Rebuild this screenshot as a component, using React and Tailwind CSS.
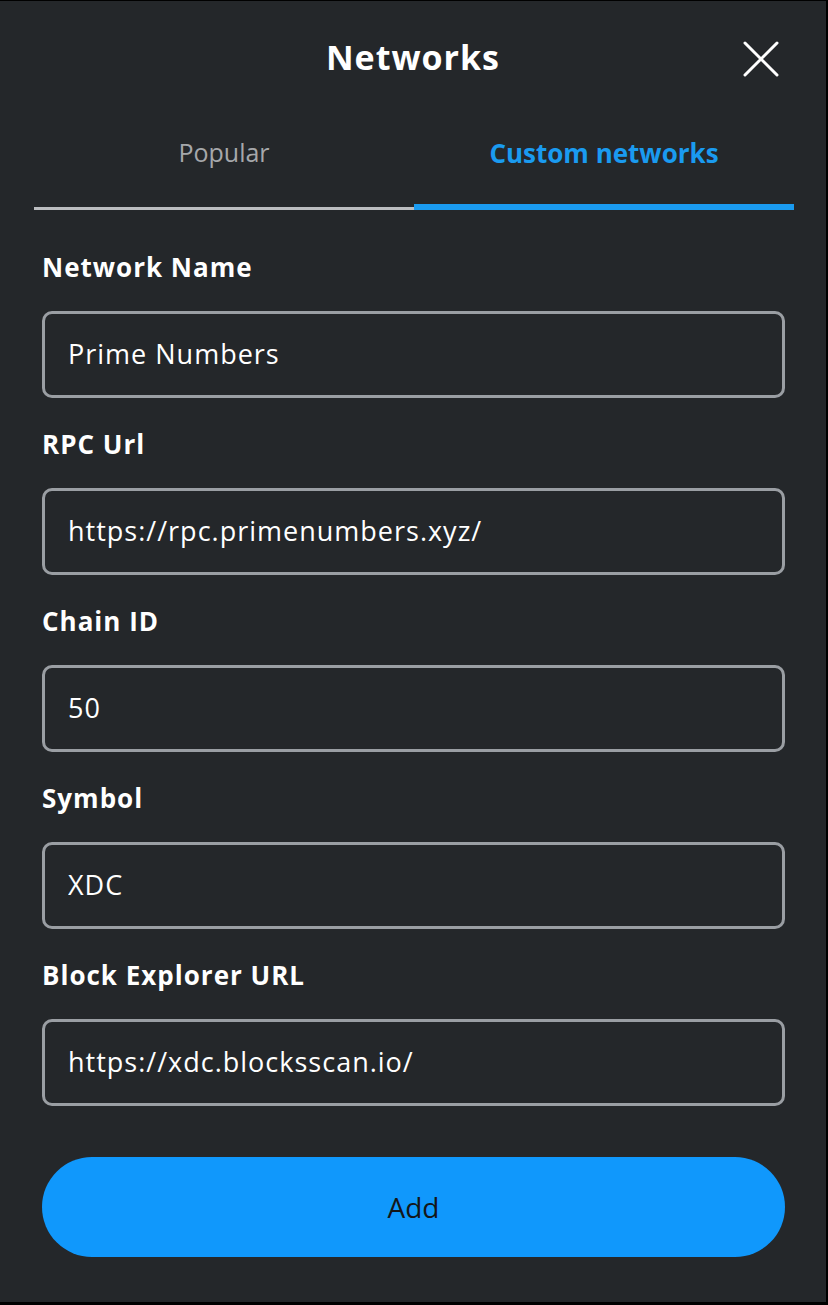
import { useState } from "react";

const FIELDS = [
  { label: "Network Name", value: "Prime Numbers" },
  { label: "RPC Url", value: "https://rpc.primenumbers.xyz/" },
  { label: "Chain ID", value: "50" },
  { label: "Symbol", value: "XDC" },
  { label: "Block Explorer URL", value: "https://xdc.blocksscan.io/" },
];

function CloseIcon() {
  return (
    <svg width="38" height="38" viewBox="0 0 38 38" fill="none">
      <path
        d="M3 3L35 35M35 3L3 35"
        stroke="#ffffff"
        strokeWidth="3"
        strokeLinecap="round"
      />
    </svg>
  );
}

export default function App() {
  const [tab, setTab] = useState("custom");

  return (
    <div
      className="flex min-h-[1305px] w-[828px] flex-col border-t border-r-2 border-b-[3px] border-black bg-[#24272a] text-white"
      style={{ fontFamily: "'Open Sans', Lato, sans-serif" }}
    >
      <div className="relative flex h-[116px] items-start justify-center">
        <h1 className="pt-[34px] text-[34px] leading-[44px] font-bold tracking-[1px]">
          Networks
        </h1>
        <button
          type="button"
          className="absolute top-[39px] right-[46px] flex items-center justify-center"
        >
          <CloseIcon />
        </button>
      </div>

      <div className="mr-[32px] ml-[34px] flex">
        <button
          type="button"
          onClick={() => setTab("popular")}
          className="flex flex-1 flex-col"
        >
          <span
            className={`h-[88px] pt-[17px] text-center text-[25px] ${
              tab === "popular" ? "font-bold text-[#1a9bf0]" : "text-[#a6a8ab]"
            }`}
          >
            Popular
          </span>
          <span
            className={`mt-auto w-full ${
              tab === "popular" ? "h-[6px] bg-[#1a9bf0]" : "h-[3px] bg-[#bbbdc0]"
            }`}
          />
        </button>
        <button
          type="button"
          onClick={() => setTab("custom")}
          className="flex flex-1 flex-col"
        >
          <span
            className={`h-[87px] pt-[17px] text-center text-[26px] ${
              tab === "custom" ? "font-bold text-[#1a9bf0]" : "text-[#a6a8ab]"
            }`}
          >
            Custom networks
          </span>
          <span
            className={`mt-auto w-full ${
              tab === "custom" ? "h-[6px] bg-[#1a9bf0]" : "h-[3px] bg-[#bbbdc0]"
            }`}
          />
        </button>
      </div>

      <div className="flex flex-col pt-[38px] pr-[41px] pl-[42px]">
        {FIELDS.map((f) => (
          <div key={f.label} className="mb-[27px] flex flex-col">
            <label className="block h-[63px] text-[26px] leading-[38px] font-bold tracking-[1px]">
              {f.label}
            </label>
            <div className="flex h-[87px] items-center rounded-[10px] border-[3px] border-[#9a9ea3] px-[23px]">
              <input
                className="w-full bg-transparent text-[27px] tracking-[1px] text-white outline-none"
                defaultValue={f.value}
              />
            </div>
          </div>
        ))}

        <button
          type="button"
          className="mt-[24px] flex h-[100px] items-center justify-center rounded-full bg-[#1098fc] text-[28px] text-[#141618]"
        >
          Add
        </button>
      </div>
    </div>
  );
}
